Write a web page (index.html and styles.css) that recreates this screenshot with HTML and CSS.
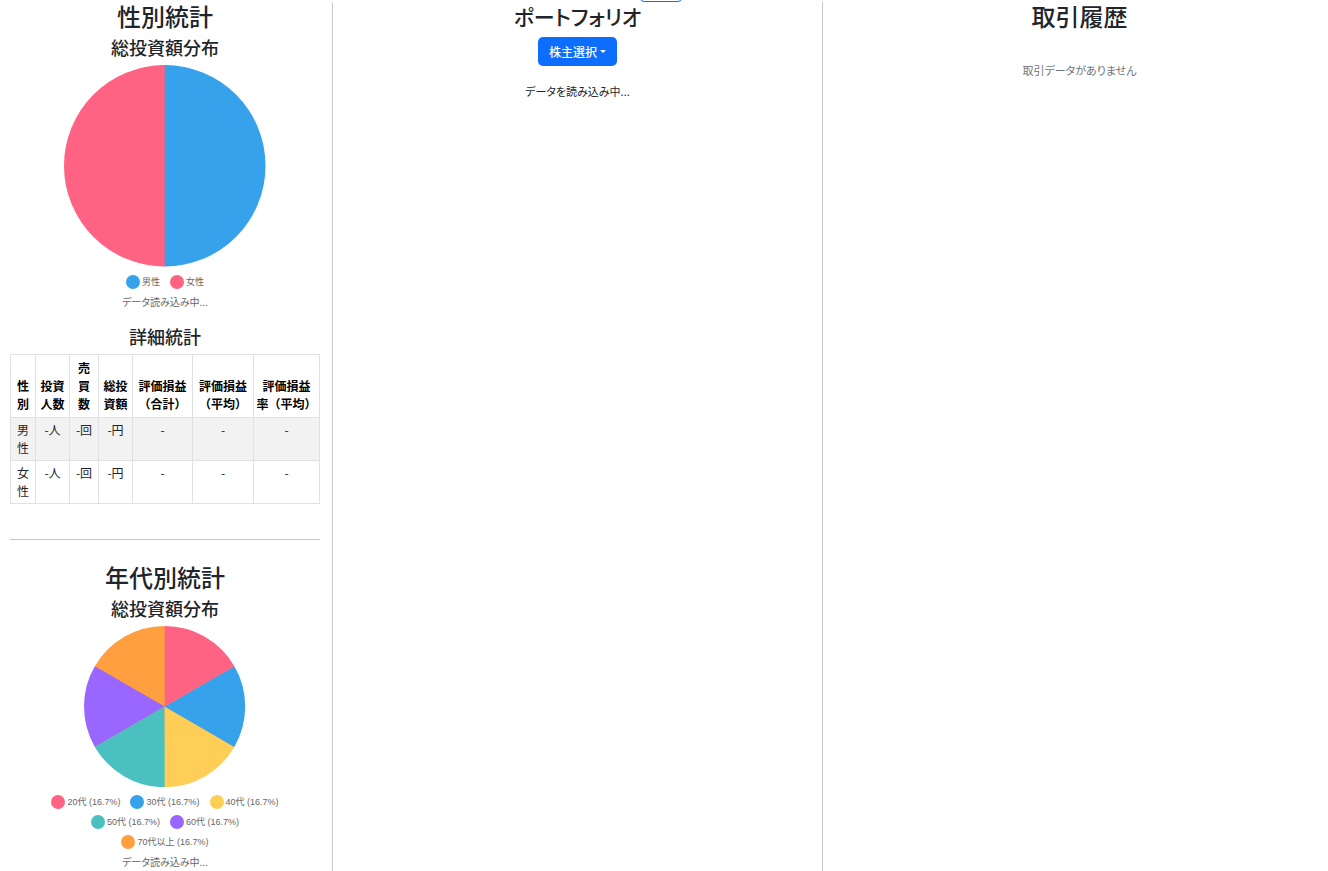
FILE: index.html
```html
<!DOCTYPE html>
<html lang="ja">
<head>
<meta charset="utf-8">
<title>ポートフォリオ</title>
<link rel="stylesheet" href="styles.css">
</head>
<body>
<button type="button" class="tab-button" aria-label="メニュー"></button>
<main class="layout">
  <section class="panel stats">
    <h2>性別統計</h2>
    <h3>総投資額分布</h3>
    <svg class="pie pie-large" viewBox="-100 -100 200 200" role="img" aria-label="性別の総投資額分布">
      <path fill="#ff6384" d="M1 0V100H0A100 100 0 0 1 0 -100H1Z"/>
      <path fill="#36a2eb" d="M0 0V-100A100 100 0 0 1 0 100Z"/>
    </svg>
    <ul class="legend">
      <li><span class="dot blue"></span>男性</li>
      <li><span class="dot pink"></span>女性</li>
    </ul>
    <p class="note">データ読み込み中...</p>
    <h3 class="detail-title">詳細統計</h3>
    <table>
      <colgroup><col class="c-sex"><col class="c-people"><col class="c-count"><col class="c-people"><col class="c-total"><col class="c-average"><col class="c-rate"></colgroup>
      <thead>
        <tr><th scope="col">性別</th><th scope="col">投資人数</th><th scope="col" class="count-head">売買数</th><th scope="col">総投資額</th><th scope="col">評価損益<br>（合計）</th><th scope="col">評価損益<br>（平均）</th><th scope="col">評価損益<br>率（平均）</th></tr>
      </thead>
      <tbody>
        <tr><td>男性</td><td>-人</td><td>-回</td><td>-円</td><td>-</td><td>-</td><td>-</td></tr>
        <tr><td>女性</td><td>-人</td><td>-回</td><td>-円</td><td>-</td><td>-</td><td>-</td></tr>
      </tbody>
    </table>
    <hr>
    <h2>年代別統計</h2>
    <h3>総投資額分布</h3>
    <svg class="pie pie-small" viewBox="-100 -100 200 200" role="img" aria-label="年代別の総投資額分布">
      <circle r="99" fill="#ff9f40"/>
      <path fill="#ff9f40" d="M0 0L-86.6 -50A100 100 0 0 1 0 -100Z"/>
      <path fill="#9966ff" d="M0 0L-86.6 50A100 100 0 0 1 -86.6 -50Z"/>
      <path fill="#4bc0c0" d="M0 0L1 100H0A100 100 0 0 1 -86.6 50Z"/>
      <path fill="#ffce56" d="M0 0L86.6 50A100 100 0 0 1 0 100Z"/>
      <path fill="#36a2eb" d="M0 0L86.6 -50A100 100 0 0 1 86.6 50Z"/>
      <path fill="#ff6384" d="M0 0V-100A100 100 0 0 1 86.6 -50Z"/>
    </svg>
    <ul class="legend">
      <li><span class="dot pink"></span>20代 (16.7%)</li>
      <li><span class="dot blue"></span>30代 (16.7%)</li>
      <li><span class="dot yellow"></span>40代 (16.7%)</li>
      <li><span class="dot teal"></span>50代 (16.7%)</li>
      <li><span class="dot purple"></span>60代 (16.7%)</li>
      <li><span class="dot orange"></span>70代以上 (16.7%)</li>
    </ul>
    <p class="note">データ読み込み中...</p>
  </section>
  <section class="panel portfolio">
    <h2>ポートフォリオ</h2>
    <button type="button" class="dropdown">株主選択<span class="caret"></span></button>
    <p class="loading">データを読み込み中...</p>
  </section>
  <section class="panel history">
    <h2>取引履歴</h2>
    <p class="empty">取引データがありません</p>
  </section>
</main>
</body>
</html>
```
FILE: styles.css
```css
* { box-sizing: border-box; }
body {
  margin: 0;
  background: #fff;
  color: #212529;
  font-family: "Noto Sans CJK JP", sans-serif;
  font-size: 12px;
  line-height: 18px;
}
h2, h3, p, ul { margin: 0; padding: 0; }
h2 { font-size: 24px; font-weight: 500; line-height: 28px; }
h3 { font-size: 18px; font-weight: 500; line-height: 22px; margin-top: 6px; }
.layout {
  display: grid;
  grid-template-columns: 333fr 490fr 505fr;
  min-height: 100vh;
  padding-top: 2px;
}
.panel { text-align: center; border-right: 1px solid #c8c8c8; }
.history { border-right: 0; padding-left: 8px; }
.stats { padding: 0 12px 0 10px; }
.pie { display: block; margin: 7px auto 0; }
.pie-large { width: 65%; }
.pie-small { width: 52%; }
.legend {
  display: flex;
  flex-wrap: wrap;
  justify-content: center;
  gap: 6px 10px;
  margin-top: 8px;
  padding: 0 36px;
  list-style: none;
  color: #666;
  font-family: "Liberation Sans", "Noto Sans CJK JP", sans-serif;
  font-size: 9px;
  line-height: 14px;
}
.legend li { display: flex; align-items: center; gap: 2px; }
.dot { width: 14px; height: 14px; border-radius: 50%; }
.pink { background: #ff6384; }
.blue { background: #36a2eb; }
.yellow { background: #ffce56; }
.teal { background: #4bc0c0; }
.purple { background: #9966ff; }
.orange { background: #ff9f40; }
.note { margin-top: 4px; color: #666; font-size: 10px; font-feature-settings: "palt"; }
.detail-title { margin-top: 14px; }
table {
  width: 100%;
  margin-top: 7px;
  border-collapse: collapse;
  table-layout: fixed;
}
.c-sex { width: 25px; }
.c-people { width: 34px; }
.c-count { width: 29px; }
.c-total { width: 60px; }
.c-average { width: 61px; }
.c-rate { width: 66px; }
th, td { border: 1px solid #dee2e6; padding: 4px 2px; }
th { color: #000; font-weight: 700; vertical-align: bottom; }
td { color: #212529; vertical-align: top; padding: 3px; }
.count-head { padding: 4px 3px; }
tbody tr:nth-child(odd) { background: #f2f2f2; }
hr { height: 1px; margin: 35px 0 23px; border: 0; background: #c8c8c8; }
.dropdown {
  display: inline-flex;
  align-items: center;
  gap: 3px;
  margin-top: 7px;
  padding: 5px 11px;
  border: 0;
  border-radius: 5px;
  background: #0d6efd;
  color: #fff;
  font: 500 12px/19px "Noto Sans CJK JP", sans-serif;
}
.caret { border: 3px solid transparent; border-top-color: #fff; border-bottom: 0; }
.loading { margin-top: 16px; font-size: 11px; font-feature-settings: "palt"; }
.empty { margin-top: 31px; color: #6c757d; font-size: 11px; font-feature-settings: "palt"; }
.portfolio h2 { font-size: 21px; font-feature-settings: "palt"; }
.tab-button {
  position: absolute;
  top: -26px;
  left: 640px;
  width: 42px;
  height: 28px;
  border: 1px solid #0d6efd;
  border-radius: 4px;
  background: #fff;
}
```
